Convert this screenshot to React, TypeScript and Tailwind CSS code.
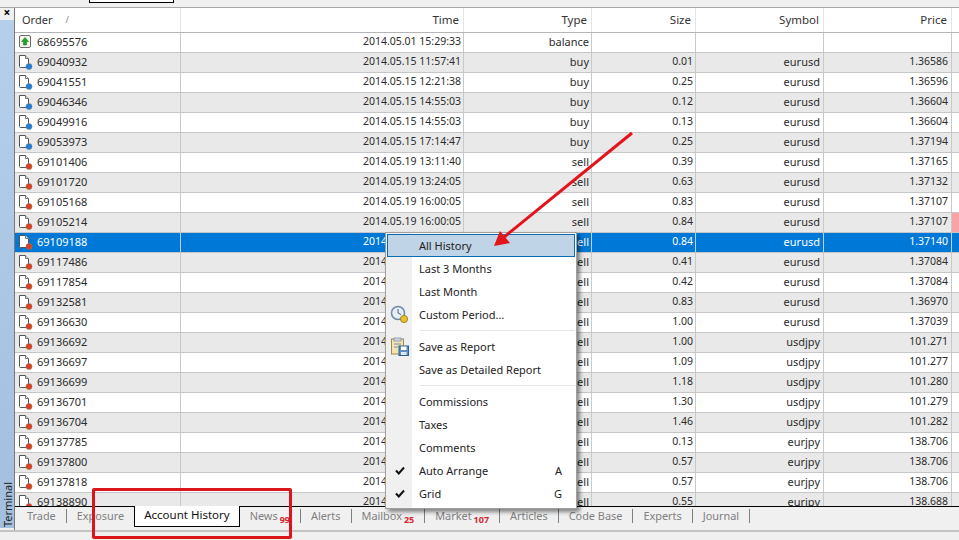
const font = "font-['Noto_Sans',sans-serif]";
const cols = "grid grid-cols-[166px_283px_128px_104px_128px_128px_1fr]";

type Row = [string, string, string, string, string, string];

const rows: Row[] = [
  ["68695576", "2014.05.01 15:29:33", "balance", "", "", ""],
  ["69040932", "2014.05.15 11:57:41", "buy", "0.01", "eurusd", "1.36586"],
  ["69041551", "2014.05.15 12:21:38", "buy", "0.25", "eurusd", "1.36596"],
  ["69046346", "2014.05.15 14:55:03", "buy", "0.12", "eurusd", "1.36604"],
  ["69049916", "2014.05.15 14:55:03", "buy", "0.13", "eurusd", "1.36604"],
  ["69053973", "2014.05.15 17:14:47", "buy", "0.25", "eurusd", "1.37194"],
  ["69101406", "2014.05.19 13:11:40", "sell", "0.39", "eurusd", "1.37165"],
  ["69101720", "2014.05.19 13:24:05", "sell", "0.63", "eurusd", "1.37132"],
  ["69105168", "2014.05.19 16:00:05", "sell", "0.83", "eurusd", "1.37107"],
  ["69105214", "2014.05.19 16:00:05", "sell", "0.84", "eurusd", "1.37107"],
  ["69109188", "2014.05.19 16:12:31", "sell", "0.84", "eurusd", "1.37140"],
  ["69117486", "2014.05.20 09:31:12", "sell", "0.41", "eurusd", "1.37084"],
  ["69117854", "2014.05.20 09:44:50", "sell", "0.42", "eurusd", "1.37084"],
  ["69132581", "2014.05.20 17:02:18", "sell", "0.83", "eurusd", "1.36970"],
  ["69136630", "2014.05.21 08:15:27", "sell", "1.00", "eurusd", "1.37039"],
  ["69136692", "2014.05.21 08:20:44", "sell", "1.00", "usdjpy", "101.271"],
  ["69136697", "2014.05.21 08:21:03", "sell", "1.09", "usdjpy", "101.277"],
  ["69136699", "2014.05.21 08:21:09", "sell", "1.18", "usdjpy", "101.280"],
  ["69136701", "2014.05.21 08:21:15", "sell", "1.30", "usdjpy", "101.279"],
  ["69136704", "2014.05.21 08:21:22", "sell", "1.46", "usdjpy", "101.282"],
  ["69137785", "2014.05.21 10:02:36", "sell", "0.13", "eurjpy", "138.706"],
  ["69137800", "2014.05.21 10:03:01", "sell", "0.57", "eurjpy", "138.706"],
  ["69137818", "2014.05.21 10:03:12", "sell", "0.57", "eurjpy", "138.706"],
  ["69138890", "2014.05.21 10:40:55", "sell", "0.55", "eurjpy", "138.688"],
];

function RowIcon({ type }: { type: string }) {
  if (type === "balance") {
    return (
      <svg width="17" height="17" viewBox="0 0 17 17" className="shrink-0">
        <rect x="1.5" y="1.5" width="11" height="12" rx="1.5" fill="#f6f6ee" stroke="#6b6b6b" />
        <path d="M7 3.5 L10.5 7.5 H8.6 V11 H5.4 V7.5 H3.5 Z" fill="#1fa52b" stroke="#0c6f18" strokeWidth="0.5" />
      </svg>
    );
  }
  const dot = type === "buy" ? "#1f7fd0" : "#d9401c";
  return (
    <svg width="17" height="17" viewBox="0 0 17 17" className="shrink-0">
      <path d="M1.5 1.5 H7.5 L10.5 4.5 V13.5 H2.5 Q1.5 13.5 1.5 12.5 Z" fill="#ffffff" stroke="#555555" />
      <path d="M7.5 1.5 V4.5 H10.5" fill="#eeeeee" stroke="#777777" />
      <circle cx="11" cy="12.5" r="3.1" fill={dot} stroke="#8a8a8a" strokeWidth="0.4" />
    </svg>
  );
}

function HeaderRow() {
  const labels = ["Time", "Type", "Size", "Symbol", "Price"];
  return (
    <div className={`${cols} h-[25px] shrink-0 border-b border-[#b5b5b5] bg-white text-[11.5px] text-[#333333]`}>
      <div className="flex items-center border-r border-[#e4e4e4] pl-[7px] pr-1 text-[11px]">
        <span>Order</span>
        <span className="ml-[13px] text-[9px] text-[#888888]">/</span>
      </div>
      {labels.map((label) => (
        <div
          key={label}
          className="flex items-center justify-end border-r border-[#e4e4e4] pr-[4px]"
        >
          {label}
        </div>
      ))}
      <div />
    </div>
  );
}

function TableRow({ row, index }: { row: Row; index: number }) {
  const selected = row[0] === "69109188";
  const tone = selected
    ? "bg-[#0078d7] text-white"
    : index % 2 === 1
      ? "bg-[#e9e9e9] text-[#2b2b2b]"
      : "bg-white text-[#2b2b2b]";
  const line = selected ? "border-[#b9d3ec]" : "border-[#c9c9c9]";
  return (
    <div className={`${cols} ${tone} h-5 shrink-0 border-b border-[#c6c6c6] text-[11px]`}>
      <div className={`flex items-center gap-[2px] border-r ${line} pl-[3px] pb-px`}>
        <RowIcon type={row[2]} />
        <span>{row[0]}</span>
      </div>
      <div className={`flex items-center justify-end border-r ${line} pr-[2px] pb-px text-[10.5px]`}>{row[1]}</div>
      <div className={`flex items-center justify-end border-r ${line} pr-[2px] pb-px`}>{row[2]}</div>
      <div className={`flex items-center justify-end border-r ${line} pr-[2px] pb-px text-[10.5px]`}>{row[3]}</div>
      <div className={`flex items-center justify-end border-r ${line} pr-[3px] pb-px`}>{row[4]}</div>
      <div className={`flex items-center justify-end border-r ${line} pr-[3px] pb-px text-[10.5px]`}>{row[5]}</div>
      <div className={row[0] === "69105214" ? "bg-[#f9a3a6]" : ""} />
    </div>
  );
}

function Sidebar() {
  return (
    <div className="flex w-[15px] shrink-0 flex-col border-r border-[#7a7a7a] bg-[#f0f0f0] pb-[2px]">
      <div className="flex h-[12px] shrink-0 items-center justify-center pb-[3px] text-[12px] font-bold leading-none text-black">
        ×
      </div>
      <div className="flex flex-1 items-end justify-center bg-gradient-to-b from-[#b5cfeb] to-[#a3bfde] pb-[1px]">
        <span className="rotate-180 text-[11px] leading-[13px] text-[#222222] [writing-mode:vertical-rl]">
          Terminal
        </span>
      </div>
    </div>
  );
}

const tabs: { label: string; badge?: string }[] = [
  { label: "Trade" },
  { label: "Exposure" },
  { label: "Account History" },
  { label: "News", badge: "99" },
  { label: "Alerts" },
  { label: "Mailbox", badge: "25" },
  { label: "Market", badge: "107" },
  { label: "Articles" },
  { label: "Code Base" },
  { label: "Experts" },
  { label: "Journal" },
];

function TabBar() {
  return (
    <div className="flex h-[24px] shrink-0 items-start border-t border-black bg-[#f0f0f0] pl-[12px] text-[10.9px] text-[#808080]">
      {tabs.map((tab, i) => {
        if (tab.label === "Account History") {
          return (
            <div
              key={tab.label}
              className="-mt-px flex h-[21px] items-center border-x border-b border-black bg-white px-[9px] pb-[2px] text-[11.5px] text-[#111111]"
            >
              {tab.label}
            </div>
          );
        }
        const next = tabs[i + 1];
        const noLine = next && next.label === "Account History";
        return (
          <div key={tab.label} className={`mt-[2px] flex h-[14px] items-center ${i === 0 ? "pr-[10px]" : "px-[10px]"} ${noLine ? "" : "border-r border-[#7f7f7f]"}`}>
            <span>{tab.label}</span>
            {tab.badge && (
              <span className="ml-[2px] mt-[7px] text-[9px] font-bold leading-none text-[#d8232f]">
                {tab.badge}
              </span>
            )}
          </div>
        );
      })}
    </div>
  );
}

function ClockIcon() {
  return (
    <svg width="20" height="20" viewBox="0 0 20 20">
      <circle cx="8" cy="8" r="6.5" fill="#e6eef6" stroke="#6f8aa8" strokeWidth="1.5" />
      <path d="M8 4 V8 L11 9.5" fill="none" stroke="#4c5f75" />
      <circle cx="14" cy="14" r="3.6" fill="#e6c23a" stroke="#a5851a" />
    </svg>
  );
}

function SaveIcon() {
  return (
    <svg width="20" height="20" viewBox="0 0 20 20">
      <rect x="1.5" y="2" width="12" height="15" fill="#f3e3b0" stroke="#9a8a55" />
      <rect x="4" y="1" width="7" height="3" fill="#cfd8e3" stroke="#74879c" strokeWidth="0.7" />
      <path d="M4 7 H11 M4 10 H8" stroke="#7590ad" />
      <rect x="9" y="9" width="9.5" height="9.5" fill="#5d8fc4" stroke="#2f5d8f" />
      <rect x="11" y="9.5" width="5.5" height="3.5" fill="#ffffff" />
      <rect x="11" y="15" width="5.5" height="3" fill="#dfe8f2" />
    </svg>
  );
}

function Check() {
  return (
    <svg width="10" height="9" viewBox="0 0 10 9">
      <path d="M1 4.5 L3.8 7.5 L9 1.5" fill="none" stroke="#111111" strokeWidth="2" />
    </svg>
  );
}

function MenuItem({
  label,
  active,
  icon,
  shortcut,
}: {
  label: string;
  active?: boolean;
  icon?: React.ReactNode;
  shortcut?: string;
}) {
  return (
    <div
      className={`flex h-[23px] items-center ${active ? "border border-[#0a6cb4] bg-[#bfd4e6]" : "border border-transparent"}`}
    >
      <div className="flex w-[24px] shrink-0 items-center justify-center">{icon}</div>
      <span className="ml-[7px] flex-1 pt-[2px]">{label}</span>
      {shortcut && <span className="mr-[12px] pt-[2px]">{shortcut}</span>}
    </div>
  );
}

function Separator() {
  return (
    <div className="flex h-[9px] items-center pl-[33px]">
      <div className="h-px w-full bg-[#e6e6e6]" />
    </div>
  );
}

function ContextMenu() {
  return (
    <div className="absolute left-[385px] top-[232px] z-10 w-[192px] border border-[#a0a0a0] bg-[linear-gradient(to_right,#f0f0f0_26px,#ffffff_26px)] p-px text-[11px] text-[#222222] shadow-[3px_3px_4px_rgba(0,0,0,0.45)]">
      <MenuItem label="All History" active />
      <MenuItem label="Last 3 Months" />
      <MenuItem label="Last Month" />
      <MenuItem label="Custom Period..." icon={<ClockIcon />} />
      <Separator />
      <MenuItem label="Save as Report" icon={<SaveIcon />} />
      <MenuItem label="Save as Detailed Report" />
      <Separator />
      <MenuItem label="Commissions" />
      <MenuItem label="Taxes" />
      <MenuItem label="Comments" />
      <MenuItem label="Auto Arrange" icon={<Check />} shortcut="A" />
      <MenuItem label="Grid" icon={<Check />} shortcut="G" />
      <div className="h-[2px]" />
    </div>
  );
}

function Annotations() {
  return (
    <>
      <svg className="absolute left-0 top-0 z-20 pointer-events-none" width="959" height="540" viewBox="0 0 959 540">
        <path d="M632 133 L503 238" stroke="#e3141b" strokeWidth="3" fill="none" />
        <path d="M494 246 L500 231 L510 243 Z" fill="#e3141b" />
      </svg>
      <div className="absolute left-[92px] top-[488px] z-20 h-[51px] w-[200px] rounded-[2px] border-[3px] border-[#dc141c]" />
    </>
  );
}

export default function App() {
  return (
    <div className={`${font} relative flex h-[540px] w-[959px] flex-col overflow-hidden bg-[#f0f0f0]`}>
      <div className="h-[7px] shrink-0 bg-[#f0f0f0] pl-[89px]">
        <div className="h-[3px] w-[85px] border-x border-b border-black bg-white" />
      </div>
      <div className="flex min-h-0 flex-1 border-t border-[#a8a8a8]">
        <Sidebar />
        <div className="flex min-w-0 flex-1 flex-col">
          <div className="flex min-h-0 flex-1 flex-col overflow-hidden bg-white">
            <HeaderRow />
            {rows.map((row, i) => (
              <TableRow key={row[0]} row={row} index={i} />
            ))}
          </div>
          <TabBar />
        </div>
      </div>
      <div className="h-[10px] shrink-0 border-t-2 border-[#c4c4c4] bg-[#f0f0f0]" />
      <ContextMenu />
      <Annotations />
    </div>
  );
}
